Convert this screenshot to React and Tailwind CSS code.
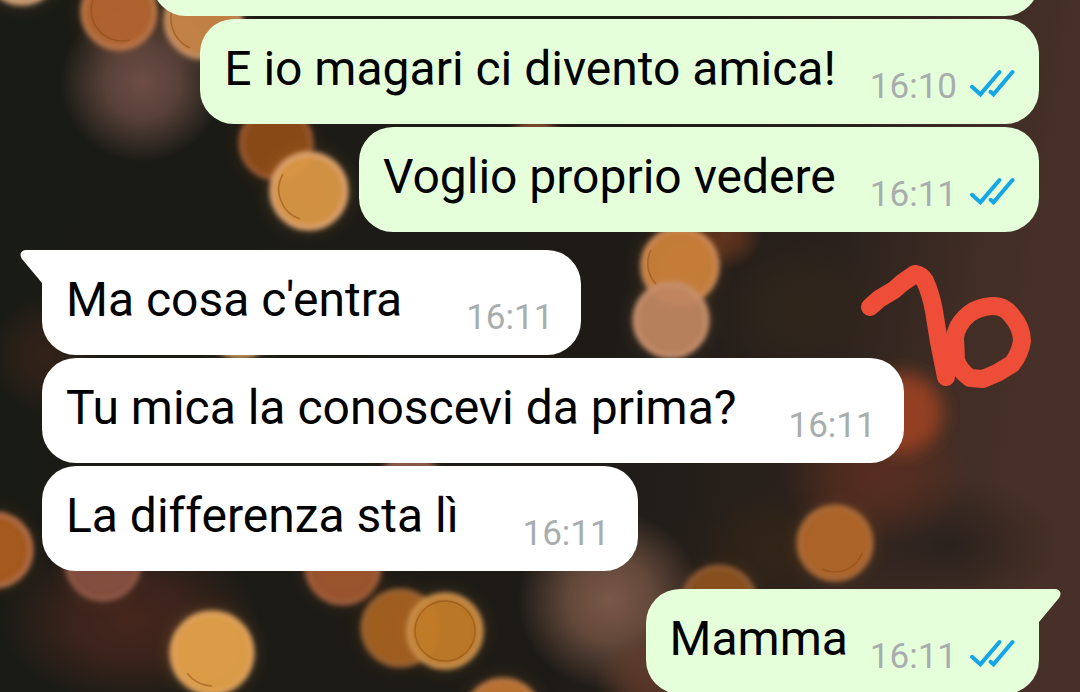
import React from "react";

const lights = [
  { x: 22, y: -33, r: 38, fill: "#d09a68", ring: "#cf9f76" },
  { x: 203, y: 20, r: 39, fill: "#c98547", ring: "#c58f66" },
  { x: 119, y: 12, r: 38, fill: "#b5652f", ring: "#bb784c" },
  { x: 276, y: 143, r: 37, fill: "#8f4b19", ring: "#98592f" },
  { x: 309, y: 191, r: 39, fill: "#dc9844", ring: "#dea471" },
  { x: 240, y: 320, r: 38, fill: "#c98f48", ring: "#cf9d62" },
  { x: 535, y: 158, r: 36, fill: "#7a4426", ring: "#7f4c30" },
  { x: 410, y: 500, r: 42, fill: "#8a5745", ring: "#916150" },
  { x: 680, y: 266, r: 39, fill: "#cc813b", ring: "#cb8a54" },
  { x: 671, y: 320, r: 38, fill: "#c08560", ring: "#c68f6c" },
  { x: -5, y: 550, r: 38, fill: "#ab5c20", ring: "#b47048" },
  { x: 103, y: 563, r: 38, fill: "#86503e", ring: "#8b5644" },
  { x: 343, y: 567, r: 38, fill: "#a0582e", ring: "#9c5d3a" },
  { x: 400, y: 628, r: 39, fill: "#a5601d", ring: "#9a6230" },
  { x: 445, y: 631, r: 38, fill: "#c27c28", ring: "#cb9350" },
  { x: 212, y: 653, r: 42, fill: "#e5a249", ring: "#dfa25e" },
  { x: 503, y: 717, r: 39, fill: "#c07430", ring: "#b97743" },
  { x: 719, y: 603, r: 38, fill: "#8c521f", ring: "#8d5832" },
  { x: 835, y: 543, r: 38, fill: "#b26627", ring: "#ab6a39" },
];

const glows = [
  { x: 142, y: 82, rx: 82, ry: 80, fill: "#76534a", o: 0.9 },
  { x: 45, y: 355, rx: 55, ry: 60, fill: "#3c251b", o: 0.7 },
  { x: 130, y: 620, rx: 130, ry: 85, fill: "#50291f", o: 0.8 },
  { x: 610, y: 600, rx: 92, ry: 90, fill: "#8a624f", o: 0.85 },
  { x: 650, y: 680, rx: 55, ry: 50, fill: "#71432f", o: 0.7 },
  { x: 725, y: 235, rx: 38, ry: 35, fill: "#8a431f", o: 0.6 },
  { x: 800, y: 310, rx: 90, ry: 70, fill: "#33281c", o: 0.7 },
  { x: 875, y: 475, rx: 95, ry: 70, fill: "#65301f", o: 0.7 },
  { x: 770, y: 550, rx: 70, ry: 60, fill: "#352616", o: 0.7 },
];

function Wallpaper() {
  return (
    <svg
      className="absolute inset-0 h-full w-full"
      viewBox="0 0 1080 692"
      preserveAspectRatio="xMidYMid slice"
      aria-hidden="true"
    >
      <defs>
        <linearGradient id="base" x1="0" y1="0" x2="1" y2="0.1">
          <stop offset="0" stopColor="#191b15" />
          <stop offset="0.6" stopColor="#1e1b17" />
          <stop offset="0.8" stopColor="#2a211c" />
          <stop offset="0.93" stopColor="#402d25" />
          <stop offset="1" stopColor="#473027" />
        </linearGradient>
        {glows.map((g, i) => (
          <radialGradient key={i} id={`glow${i}`}>
            <stop offset="0" stopColor={g.fill} stopOpacity={g.o} />
            <stop offset="0.45" stopColor={g.fill} stopOpacity={g.o * 0.75} />
            <stop offset="1" stopColor={g.fill} stopOpacity="0" />
          </radialGradient>
        ))}
        <radialGradient id="shade">
          <stop offset="0" stopColor="#1b1917" stopOpacity="0.6" />
          <stop offset="1" stopColor="#1b1917" stopOpacity="0" />
        </radialGradient>
        <filter id="soft" x="-20%" y="-20%" width="140%" height="140%">
          <feGaussianBlur stdDeviation="2.5" />
        </filter>
        <filter id="softer" x="-40%" y="-40%" width="180%" height="180%">
          <feGaussianBlur stdDeviation="9" />
        </filter>
      </defs>
      <rect width="1080" height="692" fill="url(#base)" />
      <ellipse cx="950" cy="545" rx="110" ry="70" fill="url(#shade)" />
      {glows.map((g, i) => (
        <ellipse key={i} cx={g.x} cy={g.y} rx={g.rx} ry={g.ry} fill={`url(#glow${i})`} />
      ))}
      <circle cx="903" cy="413" r="40" fill="#933f20" filter="url(#softer)" />
      {lights.map((l, i) => (
        <g key={i}>
          <circle cx={l.x} cy={l.y} r={l.r} fill={l.fill} opacity="0.25" filter="url(#softer)" />
          <g filter="url(#soft)">
            <circle cx={l.x} cy={l.y} r={l.r} fill={l.fill} opacity="0.93" />
            <circle cx={l.x} cy={l.y} r={l.r - 2} fill="none" stroke={l.ring} strokeWidth="5" />
          </g>
        </g>
      ))}
      <g fill="none" stroke="#8a4a12" strokeWidth="1.5" opacity="0.5">
        <circle cx="445" cy="631" r="30" />
        <path d="M97 -8A31 31 0 0 0 130 40M174 5A32 32 0 0 0 190 48M283 174A31 31 0 0 0 300 219M651 250A30 30 0 0 0 656 284M187 673A33 33 0 0 0 212 686M822 569A29 29 0 0 0 862 553" />
      </g>
    </svg>
  );
}

function ReadTicks() {
  return (
    <svg
      className="ml-3 h-[30px] w-[46px] shrink-0"
      viewBox="0 0 46 30"
      fill="none"
      stroke="#16a6e8"
      strokeWidth="4"
      strokeLinecap="round"
      role="img"
      aria-label="Letto"
    >
      <path d="M3 18.8 11.4 26.4 30.5 4" />
      <path d="M21.6 23.8 24.5 26.4 43.5 4" />
    </svg>
  );
}

function Tail({ out }) {
  return out ? (
    <svg className="absolute top-0 left-full h-[34px] w-[22px]" viewBox="0 0 22 34" fill="#e5ffdb" aria-hidden="true">
      <path d="M-1 0H16Q20 0 21.3 3.5Q22 6 20 9L0 33H-1Z" />
    </svg>
  ) : (
    <svg className="absolute top-0 right-full h-[34px] w-[22px]" viewBox="0 0 22 34" fill="#ffffff" aria-hidden="true">
      <path d="M23 0H6Q2 0 0.7 3.5Q0 6 2 9L22 33H23Z" />
    </svg>
  );
}

function Bubble({ text, time, out, tail, gap }) {
  const look = out ? "self-end bg-[#e5ffdb] pr-6" : "self-start bg-white pr-7";
  const corner = tail ? (out ? "rounded-tr-none" : "rounded-tl-none") : "";
  return (
    <li className={`relative flex h-[105px] items-start rounded-[34px] pl-6 ${gap} ${look} ${corner}`}>
      {tail && <Tail out={out} />}
      <p className="pt-5 text-[48px] leading-[60px] whitespace-nowrap text-black">{text}</p>
      <div className="flex items-baseline pt-12">
        <time className="text-[35px] leading-[40px] text-[#a8adae]">{time}</time>
        {out && <ReadTicks />}
      </div>
    </li>
  );
}

function Scribble() {
  return (
    <svg
      className="absolute top-[264px] right-[48px] h-[128px] w-[172px]"
      viewBox="860 264 172 128"
      fill="none"
      stroke="#ee4e38"
      strokeWidth="18"
      strokeLinecap="round"
      strokeLinejoin="round"
      aria-hidden="true"
    >
      <path d="M870 307 879 299 894 290 902 283 915 274Q921 275 925 281Q931 294 934 311L939 342 946 377" />
      <path d="M955 338Q956 325 969 314Q978 307 992 306Q1004 305 1012 316Q1022 328 1022 341Q1020 354 1012 364L997 373 983 379 970 378Q959 370 956 360Z" />
    </svg>
  );
}

export default function App() {
  return (
    <main className="relative h-screen overflow-hidden bg-[#1b1b17] font-[Roboto,sans-serif]">
      <Wallpaper />
      <div className="relative flex flex-col gap-[18px] pr-[41px] pl-[42px]">
        <ul className="flex flex-col gap-[3px]">
          <li className="-mt-[89px] ml-[110px] h-[105px] rounded-[34px] bg-[#e5ffdb]" />
          <Bubble out gap="gap-[34px]" text="E io magari ci divento amica!" time="16:10" />
          <Bubble out gap="gap-[34px]" text="Voglio proprio vedere" time="16:11" />
        </ul>
        <ul className="flex flex-col gap-[3px]">
          <Bubble tail gap="gap-16" text="Ma cosa c'entra" time="16:11" />
          <Bubble gap="gap-[52px]" text="Tu mica la conoscevi da prima?" time="16:11" />
          <Bubble gap="gap-16" text="La differenza sta lì" time="16:11" />
        </ul>
        <ul className="flex flex-col gap-[3px]">
          <Bubble out tail gap="gap-[22px]" text="Mamma" time="16:11" />
        </ul>
      </div>
      <Scribble />
    </main>
  );
}
